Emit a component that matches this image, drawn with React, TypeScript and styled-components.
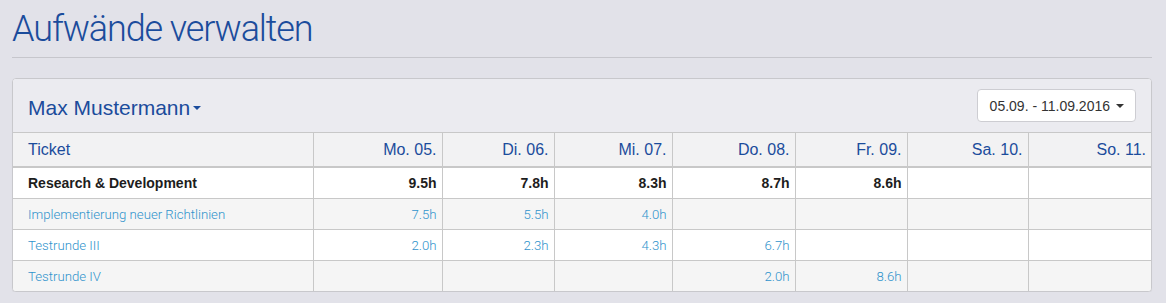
import React from "react";
import styled, { createGlobalStyle } from "styled-components";

const GlobalStyle = createGlobalStyle`
  html, body { margin: 0; padding: 0; }
  body {
    background: #e2e2e9;
    font-family: "Liberation Sans", Arial, sans-serif;
    color: #333;
  }
`;

const Page = styled.div`
  width: 1140px;
  padding: 0 14px 0 12px;
`;

const Title = styled.h1`
  margin: 9px 0 0;
  font-family: Roboto, "Liberation Sans", sans-serif;
  font-weight: 300;
  font-size: 36px;
  letter-spacing: -1.1px;
  line-height: 40px;
  color: #1b4c9c;
`;

const Rule = styled.hr`
  margin: 8px 0 20px;
  border: 0;
  border-top: 1px solid #c6c6cc;
`;

const Panel = styled.section`
  border: 1px solid #c8c8cc;
  border-radius: 4px;
  background: #ffffff;
  overflow: hidden;
  box-shadow: 0 1px 1px rgba(0, 0, 0, 0.05);
`;

const PanelHeading = styled.header`
  display: flex;
  align-items: center;
  justify-content: space-between;
  height: 53px;
  padding: 0 15px;
  background: #ebebf0;
  border-bottom: 1px solid #c8c8c8;
`;

const UserTitle = styled.h2`
  margin: 5px 0 0;
  font-size: 21px;
  line-height: 26px;
  font-weight: 400;
  color: #1b4c9c;
  display: flex;
  align-items: center;
  cursor: pointer;
`;

const Caret = styled.span<{ $color: string; $gap: number }>`
  display: inline-block;
  width: 0;
  height: 0;
  margin-left: ${(p) => p.$gap}px;
  border-top: 4px solid ${(p) => p.$color};
  border-left: 4px solid transparent;
  border-right: 4px solid transparent;
`;

const RangeButton = styled.button`
  display: flex;
  align-items: center;
  height: 33px;
  padding: 6px 11px 6px 12px;
  font-family: "Liberation Sans", Arial, sans-serif;
  font-size: 14px;
  line-height: 20px;
  color: #333;
  background: #fff;
  border: 1px solid #cdcdd2;
  border-radius: 4px;
  cursor: pointer;
`;

const Table = styled.table`
  width: 100%;
  table-layout: fixed;
  border-collapse: collapse;
`;

const HeadCell = styled.th<{ $first?: boolean }>`
  padding: ${(p) => (p.$first ? "8px 5px 8px 15px" : "8px 5px")};
  font-size: 16px;
  line-height: 17px;
  font-weight: 400;
  color: #1b4c9c;
  text-align: ${(p) => (p.$first ? "left" : "right")};
  background: #f2f2f3;
  border-bottom: 2px solid #c8c8c8;
  border-left: ${(p) => (p.$first ? "0" : "1px solid #c8c8c8")};
`;

const Row = styled.tr<{ $striped?: boolean }>`
  background: ${(p) => (p.$striped ? "#f5f5f5" : "#ffffff")};
`;

const Cell = styled.td<{ $first?: boolean; $bold?: boolean; $ruled?: boolean }>`
  padding: ${(p) => (p.$first ? "7px 5px 6px 15px" : "7px 5px 6px")};
  height: 17px;
  font-family: ${(p) =>
    p.$bold ? `"Liberation Sans", Arial, sans-serif` : `Roboto, "Liberation Sans", sans-serif`};
  font-size: ${(p) => (p.$bold ? "14px" : "13.2px")};
  line-height: 17px;
  font-weight: ${(p) => (p.$bold ? 700 : 300)};
  color: ${(p) => (p.$bold ? "#1d1d1d" : "#2f93cc")};
  text-align: ${(p) => (p.$first ? "left" : "right")};
  white-space: nowrap;
  border-left: ${(p) => (p.$first ? "0" : "1px solid #c8c8c8")};
  border-top: ${(p) => (p.$ruled ? "1px solid #c8c8c8" : "0")};
`;

const days = ["Mo. 05.", "Di. 06.", "Mi. 07.", "Do. 08.", "Fr. 09.", "Sa. 10.", "So. 11."];
const widths = [300, 129, 112, 118, 123, 112, 121, 123];

type RowData = { name: string; values: string[]; bold?: boolean };

const rows: RowData[] = [
  { name: "Research & Development", values: ["9.5h", "7.8h", "8.3h", "8.7h", "8.6h", "", ""], bold: true },
  { name: "Implementierung neuer Richtlinien", values: ["7.5h", "5.5h", "4.0h", "", "", "", ""] },
  { name: "Testrunde III", values: ["2.0h", "2.3h", "4.3h", "6.7h", "", "", ""] },
  { name: "Testrunde IV", values: ["", "", "", "2.0h", "8.6h", "", ""] },
];

export default function App() {
  return (
    <Page>
      <GlobalStyle />
      <Title>Aufwände verwalten</Title>
      <Rule />
      <Panel>
        <PanelHeading>
          <UserTitle>
            Max Mustermann
            <Caret $color="#1b4c9c" $gap={3} />
          </UserTitle>
          <RangeButton type="button">
            05.09. - 11.09.2016
            <Caret $color="#333" $gap={6} />
          </RangeButton>
        </PanelHeading>
        <Table>
          <colgroup>
            {widths.map((w, i) => (
              <col key={i} style={{ width: w }} />
            ))}
          </colgroup>
          <thead>
            <tr>
              <HeadCell $first>Ticket</HeadCell>
              {days.map((d) => (
                <HeadCell key={d}>{d}</HeadCell>
              ))}
            </tr>
          </thead>
          <tbody>
            {rows.map((r, i) => (
              <Row key={r.name} $striped={i % 2 === 1}>
                <Cell $first $bold={r.bold} $ruled={i > 0}>
                  {r.name}
                </Cell>
                {r.values.map((v, j) => (
                  <Cell key={j} $bold={r.bold} $ruled={i > 0}>
                    {v}
                  </Cell>
                ))}
              </Row>
            ))}
          </tbody>
        </Table>
      </Panel>
    </Page>
  );
}
